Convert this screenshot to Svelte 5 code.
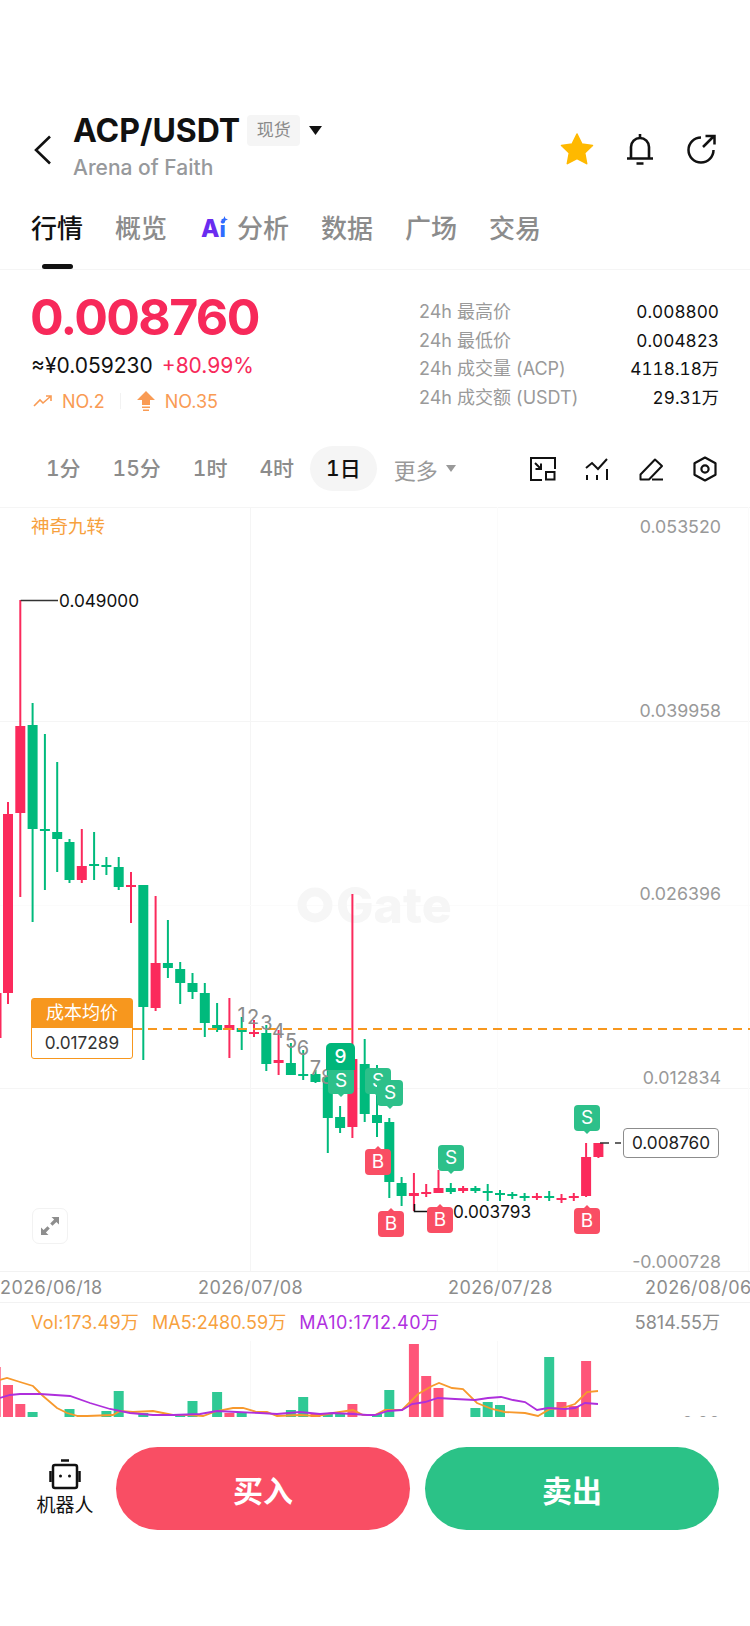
<script>
  const tabs = ["行情", "概览", "分析", "数据", "广场", "交易"];
  const periods = ["1分", "15分", "1时", "4时", "1日"];
  const stats = [
    ["24h 最高价", "0.008800"],
    ["24h 最低价", "0.004823"],
    ["24h 成交量 (ACP)", "4118.18万"],
    ["24h 成交额 (USDT)", "29.31万"],
  ];

  // candles: color, wick top, body top, body bottom, wick bottom (page y)
  const raw = [
    ["r", 802, 814, 993, 1004],
    ["r", 600, 726, 813, 897],
    ["g", 703, 725, 829, 922],
    ["g", 734, 829, 831, 890],
    ["g", 762, 832, 839, 872],
    ["g", 839, 842, 880, 883],
    ["r", 829, 866, 880, 883],
    ["g", 832, 864, 866, 880],
    ["g", 857, 865, 867, 875],
    ["g", 857, 867, 887, 890],
    ["r", 872, 885, 887, 923],
    ["g", 885, 885, 1007, 1060],
    ["r", 896, 963, 1008, 1011],
    ["g", 920, 963, 968, 978],
    ["g", 962, 969, 983, 1004],
    ["g", 973, 983, 992, 999],
    ["g", 983, 993, 1023, 1037],
    ["g", 1003, 1025, 1030, 1032],
    ["r", 998, 1025, 1030, 1058],
    ["g", 1017, 1028, 1032, 1050],
    ["r", 1020, 1032, 1033, 1037],
    ["g", 1025, 1033, 1064, 1071],
    ["r", 1030, 1060, 1063, 1075],
    ["g", 1043, 1063, 1075, 1075],
    ["g", 1050, 1074, 1076, 1080],
    ["g", 1070, 1074, 1082, 1083],
    ["g", 1045, 1077, 1118, 1153],
    ["g", 1106, 1117, 1128, 1133],
    ["r", 894, 1059, 1127, 1138],
    ["g", 1039, 1064, 1114, 1122],
    ["g", 1065, 1115, 1123, 1137],
    ["g", 1118, 1122, 1182, 1198],
    ["g", 1177, 1183, 1196, 1206],
    ["r", 1173, 1193, 1196, 1211],
    ["r", 1184, 1192, 1194, 1197],
    ["r", 1170, 1188, 1193, 1193],
    ["g", 1183, 1188, 1192, 1194],
    ["r", 1186, 1188, 1191, 1193],
    ["g", 1186, 1188, 1191, 1193],
    ["g", 1184, 1191, 1193, 1201],
    ["g", 1190, 1193, 1195, 1201],
    ["g", 1192, 1194, 1196, 1199],
    ["g", 1193, 1196, 1197, 1201],
    ["r", 1193, 1196, 1197, 1200],
    ["g", 1191, 1196, 1198, 1201],
    ["r", 1194, 1198, 1199, 1203],
    ["r", 1193, 1196, 1197, 1201],
    ["r", 1143, 1157, 1196, 1197],
    ["r", 1143, 1143, 1157, 1158],
  ];
  const candles = raw.map((c, i) => ({
    x: 8 + 12.3 * i,
    color: c[0] === "r" ? "#fb2a5c" : "#00ba7c",
    top: c[1],
    bodyTop: c[2],
    bodyH: c[3] - c[2],
    bottom: c[4],
  }));

  const axis = [
    ["0.053520", 526],
    ["0.039958", 710],
    ["0.026396", 893],
    ["0.012834", 1077],
    ["-0.000728", 1261],
  ];
  const seq = [
    ["1", 241.5, 1015],
    ["2", 253, 1017],
    ["3", 266.5, 1023],
    ["4", 278.5, 1031],
    ["5", 291, 1041],
    ["6", 303, 1048],
    ["7", 315.5, 1068],
    ["8", 327, 1077],
  ];
  // trade badges: letter, left, top, pointer direction
  const badges = [
    ["S", 328, 1068, "down"],
    ["S", 365, 1068, "down"],
    ["S", 377, 1080, "down"],
    ["B", 365, 1149, "up"],
    ["B", 378, 1211, "up"],
    ["B", 427, 1207, "up"],
    ["S", 438, 1145, "down"],
    ["S", 574, 1105, "down"],
    ["B", 574, 1208, "up"],
  ];

  // volume bars: candle index (-1 is the clipped one at the left edge), bar top, color
  const volumes = [
    [-1, 1366, "r"], [0, 1384, "r"], [1, 1403, "r"], [2, 1411, "g"], [5, 1408, "g"], [6, 1414, "r"],
    [8, 1410, "g"], [9, 1390, "g"], [11, 1412, "g"], [14, 1413, "g"], [15, 1400, "g"], [17, 1391, "g"],
    [18, 1412, "r"], [19, 1411, "g"], [23, 1409, "g"], [24, 1396, "g"], [25, 1413, "r"], [26, 1412, "g"],
    [27, 1413, "g"], [28, 1403, "r"], [30, 1413, "g"], [31, 1389, "g"], [33, 1343, "r"], [34, 1375, "r"],
    [35, 1387, "r"], [38, 1407, "g"], [39, 1401, "g"], [40, 1404, "g"], [44, 1356, "g"], [45, 1401, "r"],
    [46, 1405, "r"], [47, 1360, "r"],
  ];
  const ma5 = "0,1379 7,1377 20,1381 33,1385 43,1395 57,1407 67,1412 78,1415 87,1415 113,1414 120,1410 133,1411 153,1410 173,1414 190,1414 203,1415 217,1410 233,1407 243,1407 257,1411 267,1411 277,1415 300,1414 317,1415 333,1412 353,1409 363,1414 375,1414 385,1409 402,1409 418,1393 432,1385 439,1382 452,1387 463,1388 477,1402 492,1408 505,1411 525,1412 538,1415 550,1408 562,1407 575,1403 587,1391 598,1390";
  const ma10 = "0,1397 10,1394 20,1393 40,1393 70,1395 90,1402 110,1408 130,1412 153,1414 173,1414 200,1413 217,1410 237,1411 260,1412 277,1413 300,1411 320,1413 333,1412 353,1413 367,1414 375,1414 388,1410 402,1409 412,1403 425,1401 438,1397 455,1398 475,1399 488,1397 501,1396 513,1399 525,1401 537,1409 548,1407 565,1408 575,1407 585,1402 598,1403";
</script>

<div class="page">
  <header class="header">
    <svg class="back" width="20" height="30" viewBox="0 0 20 30"><path d="M17 1.5 3 15l14 13.5" fill="none" stroke="#111" stroke-width="2.6" /></svg>
    <div class="name">
      <div class="title-row">
        <span class="title">ACP/USDT</span>
        <span class="badge">现货</span>
        <svg class="caret" width="13" height="9" viewBox="0 0 13 9"><path d="M0 0h13L6.500 9z" fill="#111" /></svg>
      </div>
      <div class="subtitle">Arena of Faith</div>
    </div>
    <div class="actions">
      <svg width="34" height="32" viewBox="0 0 34 32"><path d="M17 1l4.800 9.900 10.700 1.500-7.800 7.500 2 10.800L17 25.500 7.300 30.700l2-10.800-7.800-7.500 10.700-1.500z" fill="#ffb900" stroke="#ffb900" stroke-width="1.500" stroke-linejoin="round" /></svg>
      <svg width="28" height="32" viewBox="0 0 28 32"><path d="M14 1v3M5 25V14a9 9 0 0 1 18 0v11M1 25.500h26M10.500 30.500h7" fill="none" stroke="#111" stroke-width="2.600" /></svg>
      <svg width="30" height="30" viewBox="0 0 30 30"><path d="M15 3.500A12.500 12.500 0 1 0 27.500 16M17 13 28 2M19.500 2H28.500V10.500" fill="none" stroke="#111" stroke-width="2.500" /></svg>
    </div>
  </header>

  <nav class="tabs">
    {#each tabs as tab, i}
      <div class="tab" class:active={i === 0}>
        {#if tab === "分析"}
          <span class="ai">A<i>i</i><svg class="spark" width="7" height="7" viewBox="0 0 7 7"><path d="M3.500 0 4.400 2.600 7 3.500 4.400 4.400 3.500 7 2.600 4.400 0 3.500 2.600 2.600z" fill="#2f6bff" /></svg></span>
        {/if}
        <span>{tab}</span>
      </div>
    {/each}
  </nav>

  <section class="quote">
    <div class="price-col">
      <div class="price">0.008760</div>
      <div class="sub-price"><span>≈¥0.059230</span><span class="pct">+80.99%</span></div>
      <div class="ranks">
        <svg width="20" height="12" viewBox="0 0 20 12"><path d="M1 11l6-6 3 3 8-7M13 1h5v5" fill="none" stroke="#f99b54" stroke-width="1.600" /></svg>
        <span>NO.2</span>
        <i class="sep"></i>
        <svg width="20" height="20" viewBox="0 0 20 20"><path d="M10 0l9 9h-5v5H6V9H1zM6 15.500h8V17H6zM7 18.500h6V20H7z" fill="#f99b54" /></svg>
        <span>NO.35</span>
      </div>
    </div>
    <div class="stats">
      {#each stats as s}
        <div class="stat"><span class="k">{s[0]}</span><span class="v">{s[1]}</span></div>
      {/each}
    </div>
  </section>

  <section class="periods">
    {#each periods as p, i}
      <div class="period" class:on={i === 4}>{p}</div>
    {/each}
    <div class="more">更多<svg width="10" height="7" viewBox="0 0 10 7"><path d="M0 0h10L5 7z" fill="#999" /></svg></div>
    <div class="tools">
      <svg width="27" height="24" viewBox="0 0 27 24" fill="none" stroke="#111" stroke-width="2"><path d="M13 23H2V1h24v11" /><rect x="17" y="15" width="8.500" height="7.500" /><path d="M6 6l6 6M6.500 12H12V6.500" /></svg>
      <svg width="24" height="24" viewBox="0 0 24 24" fill="none" stroke="#111" stroke-width="2"><path d="M1 11l6-5 6 6 9-10M2 18v5M12 18v5M22 12v11" /></svg>
      <svg width="25" height="24" viewBox="0 0 25 24" fill="none" stroke="#111" stroke-width="2"><path d="M1.500 22.500v-5L16 2.500l7 6.500-13 13.500zM13 22.500h11" stroke-linejoin="round" /></svg>
      <svg width="24" height="26" viewBox="0 0 24 26" fill="none" stroke="#111" stroke-width="2.200"><path d="M12 1.500l10.500 5.800v11.400L12 24.500 1.500 18.700V7.300z" stroke-linejoin="round" /><circle cx="12" cy="13" r="3.600" /></svg>
    </div>
  </section>

  <section class="chart">
    <svg class="plot" width="750" height="764" viewBox="0 507 750 764">
      <path d="M0 507.500H750M0 721.500H750M0 1088.500H750M250.500 507V1271" fill="none" stroke="#f5f5f5" />
      <path d="M497.500 507V1271M748.500 507V1271M0 905.500H750" fill="none" stroke="#fbfbfb" />
      <text class="watermark" x="336" y="923">Gate</text>
      <circle class="wm-logo" cx="315" cy="905" r="13" />
      {#each axis as a}
        <text class="axis" x="721" y={a[1] + 6.500} text-anchor="end">{a[0]}</text>
      {/each}
      <text class="magic" x="31" y="533">神奇九转</text>
      <line x1="0.500" y1="993" x2="0.500" y2="1038" stroke="#fb2a5c" stroke-width="2" />
      {#each candles as c}
        <line x1={c.x} x2={c.x} y1={c.top} y2={c.bottom} stroke={c.color} stroke-width="2" />
        <rect x={c.x - 5} y={c.bodyTop} width="10" height={Math.max(c.bodyH, 2)} fill={c.color} />
      {/each}
      <path d="M20.700 600.500H58" stroke="#333" stroke-width="1.500" fill="none" />
      <text class="mark" x="59" y="606.500">0.049000</text>
      <path d="M414.500 1204v7.500H436" stroke="#111" stroke-width="1.500" fill="none" />
      <text class="mark" x="453" y="1218">0.003793</text>
      <line x1="133" x2="750" y1="1029" y2="1029" stroke="#f7971e" stroke-width="2" stroke-dasharray="9 6" />
      {#each seq as s}
        <text class="seq" x={s[1]} y={s[2] + 7} text-anchor="middle">{s[0]}</text>
      {/each}
      <path d="M600 1143h9M615 1143h6" stroke="#333" stroke-width="1.500" fill="none" />
    </svg>

    <div class="cost">
      <div class="cost-head">成本均价</div>
      <div class="cost-val">0.017289</div>
    </div>

    {#each badges as b}
      <div class="trade {b[0] === 'S' ? 'sell' : 'buy'} {b[3]}" style="left:{b[1]}px;top:{b[2] - 507}px">{b[0]}</div>
    {/each}
    <div class="nine">9</div>

    <div class="last">0.008760</div>
    <div class="expand">
      <svg width="18" height="18" viewBox="0 0 18 18" fill="#8e8e8e"><path d="M10.500 0H18V7.500L15.400 4.900 11.500 8.800 9.200 6.500 13.100 2.600zM7.500 18H0V10.500L2.600 13.100 6.500 9.200 8.800 11.500 4.900 15.400z" /></svg>
    </div>
  </section>

  <div class="dates">
    <span>2026/06/18</span><span>2026/07/08</span><span>2026/07/28</span><span>2026/08/06</span>
  </div>

  <section class="volume">
    <div class="legend">
      <span class="orange vol">Vol:173.49万</span>
      <span class="orange">MA5:2480.59万</span>
      <span class="purple">MA10:1712.40万</span>
      <span class="max">5814.55万</span>
    </div>
    <svg class="vol-plot" width="750" height="114" viewBox="0 1302 750 114">
      <path d="M250.500 1340V1416M497.500 1340V1416" stroke="#f8f8f8" fill="none" />
      {#each volumes as v}
        <rect x={8 + 12.3 * v[0] - 5} y={v[1]} width="10" height={1416 - v[1]} fill={v[2] === "r" ? "#fe5679" : "#30c995"} />
      {/each}
      <polyline points={ma5} fill="none" stroke="#f7992d" stroke-width="1.800" />
      <polyline points={ma10} fill="none" stroke="#ae2fdc" stroke-width="1.800" />
      <text class="zero" x="720" y="1429" text-anchor="end">0.00</text>
    </svg>
  </section>

  <footer class="bar">
    <div class="robot">
      <svg width="32" height="31" viewBox="0 0 32 31" fill="none" stroke="#111" stroke-width="2.500"><path d="M12 1.500h8" /><rect x="4" y="6" width="24" height="23" rx="2" /><path d="M1.500 12v11M30.500 12v11" /><circle cx="11.500" cy="17" r="1.500" fill="#111" stroke="none" /><circle cx="20.500" cy="17" r="1.500" fill="#111" stroke="none" /></svg>
      <span>机器人</span>
    </div>
    <button class="btn buy-btn">买入</button>
    <button class="btn sell-btn">卖出</button>
  </footer>
</div>

<style>
  :global(body) {
    margin: 0;
    background: #fff;
  }
  .page {
    width: 750px;
    height: 1626px;
    overflow: hidden;
    padding-top: 100px;
    box-sizing: border-box;
    font-family: Inter, "Noto Sans CJK SC", sans-serif;
    color: #111;
    background: #fff;
  }
  .header {
    display: flex;
    align-items: flex-start;
    height: 105px;
    padding: 0 34px 0 33px;
  }
  .back {
    margin: 35px 20px 0 0;
  }
  .title-row {
    display: flex;
    align-items: center;
    height: 48px;
    margin-top: 6px;
  }
  .title {
    font-size: 32px;
    font-weight: 700;
  }
  .badge {
    margin-left: 7px;
    width: 53px;
    height: 31px;
    line-height: 31px;
    text-align: center;
    font-size: 17px;
    color: #8a8a8a;
    background: #f5f5f5;
    border-radius: 4px;
  }
  .caret {
    margin-left: 9px;
  }
  .subtitle {
    font-size: 21px;
    font-weight: 500;
    color: #97999c;
    margin-top: 1px;
  }
  .actions {
    margin-left: auto;
    display: flex;
    align-items: center;
    gap: 32px;
    height: 32px;
    margin-top: 33px;
  }
  .tabs {
    display: flex;
    height: 64px;
    padding-left: 31px;
    border-bottom: 1px solid #f5f5f5;
    gap: 32px;
  }
  .tab {
    position: relative;
    display: flex;
    gap: 9px;
    font-size: 26px;
    line-height: 48px;
    color: #8c8c8c;
    white-space: nowrap;
    font-weight: 500;
  }
  .tab.active {
    color: #111;
  }
  .tab.active::after {
    content: "";
    position: absolute;
    left: 11px;
    bottom: 0;
    width: 31px;
    height: 5px;
    border-radius: 3px;
    background: #111;
  }
  .ai {
    position: relative;
    width: 29px;
    padding-left: 2px;
    box-sizing: border-box;
    font-size: 24px;
    font-weight: 800;
    color: #6a2cf0;
  }
  .ai i {
    font-style: normal;
    color: #2f6bff;
    font-size: 22px;
  }
  .spark {
    position: absolute;
    right: 0;
    top: 11px;
  }
  .quote {
    display: flex;
    justify-content: space-between;
    height: 160px;
    padding: 0 31px;
  }
  .price {
    font-size: 50px;
    font-weight: 700;
    line-height: 60px;
    margin: 17px 0 0 -1px;
    color: #f7295a;
    letter-spacing: -1.650px;
  }
  .sub-price {
    display: flex;
    gap: 9px;
    font-size: 21px;
    line-height: 28px;
    margin-top: 5px;
  }
  .pct {
    color: #f7295a;
  }
  .ranks {
    display: flex;
    align-items: center;
    font-size: 18px;
    color: #f99b54;
    margin-top: 7px;
    height: 28px;
    margin-left: 2px;
  }
  .ranks span {
    margin-left: 9px;
  }
  .sep {
    width: 1px;
    height: 16px;
    background: #f2f2f2;
    margin: 0 15px;
  }
  .stats {
    width: 300px;
    padding-top: 28px;
  }
  .stat {
    display: flex;
    justify-content: space-between;
    height: 28.600px;
    line-height: 28.600px;
    font-size: 17.200px;
  }
  .v {
    font-variant-numeric: tabular-nums;
  }
  .k {
    color: #9a9a9a;
    font-size: 18px;
  }
  .periods {
    display: flex;
    align-items: center;
    height: 77px;
    padding: 0 33px 0 30px;
  }
  .period {
    font-size: 21px;
    font-weight: 500;
    font-variant-numeric: tabular-nums;
    color: #8c8c8c;
    padding: 0 16px;
    height: 45px;
    line-height: 45px;
    text-align: center;
    box-sizing: border-box;
  }
  .period.on {
    color: #111;
    background: #f5f5f5;
    border-radius: 23px;
  }
  .more {
    display: flex;
    align-items: center;
    gap: 8px;
    font-size: 22px;
    color: #999;
    margin-left: 17px;
  }
  .tools {
    margin-left: auto;
    display: flex;
    align-items: center;
    gap: 29.300px;
  }
  .chart {
    position: relative;
    height: 764px;
  }
  .plot,
  .vol-plot {
    display: block;
  }
  .axis {
    font-size: 17.800px;
    fill: #999;
  }
  .magic {
    font-size: 18.500px;
    fill: #f7a13e;
  }
  .mark {
    font-size: 17.200px;
    fill: #111;
  }
  .seq {
    font-size: 20px;
    fill: #8c8c8c;
  }
  .watermark {
    font-size: 50px;
    font-weight: 800;
    fill: #f6f6f6;
  }
  .wm-logo {
    fill: none;
    stroke: #f6f6f6;
    stroke-width: 9;
  }
  .cost {
    position: absolute;
    left: 31px;
    top: 491px;
    width: 102px;
    height: 61px;
    box-sizing: border-box;
    border: 1.500px solid #f7971e;
    border-radius: 3px;
    background: #fff;
    text-align: center;
  }
  .cost-head {
    height: 29px;
    line-height: 28px;
    background: #f7971e;
    color: #fff;
    font-size: 18px;
  }
  .cost-val {
    line-height: 29px;
    font-size: 17.200px;
    color: #333;
  }
  .trade {
    position: absolute;
    width: 26px;
    height: 26px;
    line-height: 26px;
    border-radius: 4px;
    text-align: center;
    color: #fff;
    font-size: 19px;
  }
  .trade::after {
    content: "";
    position: absolute;
    left: 10px;
    border-left: 3px solid transparent;
    border-right: 3px solid transparent;
  }
  .trade.down::after {
    bottom: -3px;
    border-top: 3px solid #2dc08a;
  }
  .trade.up::after {
    top: -3px;
    border-bottom: 3px solid #f94e64;
  }
  .sell {
    background: #2dc08a;
  }
  .buy {
    background: #f94e64;
  }
  .nine {
    position: absolute;
    left: 326px;
    top: 536px;
    width: 29px;
    height: 27px;
    line-height: 27px;
    border-radius: 5px 5px 0 0;
    background: #00b67a;
    color: #fff;
    text-align: center;
    font-size: 19px;
    font-weight: 500;
  }
  .last {
    position: absolute;
    left: 623px;
    top: 621px;
    width: 96px;
    height: 30px;
    line-height: 28px;
    box-sizing: border-box;
    border: 1px solid #8c8c8c;
    border-radius: 4px;
    background: #fff;
    text-align: center;
    font-size: 17.200px;
    color: #222;
  }
  .expand {
    position: absolute;
    left: 32px;
    top: 701px;
    width: 36px;
    height: 36px;
    box-sizing: border-box;
    border: 1.500px solid #f2f2f2;
    border-radius: 7px;
    background: #fff;
    display: flex;
    align-items: center;
    justify-content: center;
  }
  .dates {
    display: flex;
    height: 30px;
    line-height: 32px;
    border-top: 1px solid #f2f2f2;
    border-bottom: 1px solid #f2f2f2;
    font-size: 18px;
    letter-spacing: 0.400px;
    color: #8c8c8c;
    white-space: nowrap;
  }
  .dates span {
    width: 104px;
  }
  .dates span:nth-child(2) {
    margin-left: 94px;
  }
  .dates span:nth-child(3) {
    margin-left: 146px;
  }
  .dates span:nth-child(4) {
    margin-left: 93px;
  }
  .volume {
    position: relative;
    height: 114px;
    overflow: hidden;
  }
  .vol-plot {
    position: absolute;
    left: 0;
    top: 0;
  }
  .legend {
    position: relative;
    z-index: 1;
    display: flex;
    gap: 13px;
    padding: 7px 30px 0 31px;
    font-size: 18px;
    line-height: 26px;
  }
  .orange {
    color: #f7a13e;
  }
  .vol {
    letter-spacing: 0.200px;
  }
  .purple {
    color: #b030e0;
    letter-spacing: 0.500px;
  }
  .max {
    margin-left: auto;
    color: #8c8c8c;
  }
  .zero {
    font-size: 18px;
    fill: #999;
  }
  .bar {
    display: flex;
    align-items: center;
    height: 83px;
    margin-top: 30px;
    padding: 0 31px 0 37px;
  }
  .robot {
    display: flex;
    flex-direction: column;
    align-items: center;
    width: 56px;
    margin-right: 23px;
    font-size: 19px;
    line-height: 26px;
    gap: 3px;
    white-space: nowrap;
  }
  .btn {
    flex: 0 0 auto;
    height: 83px;
    border: none;
    border-radius: 42px;
    color: #fff;
    font-family: inherit;
    font-size: 30px;
    font-weight: 700;
  }
  .buy-btn {
    width: 294px;
    background: #f94e64;
    margin-right: 15px;
  }
  .sell-btn {
    width: 294px;
    background: #2bc287;
  }
</style>
